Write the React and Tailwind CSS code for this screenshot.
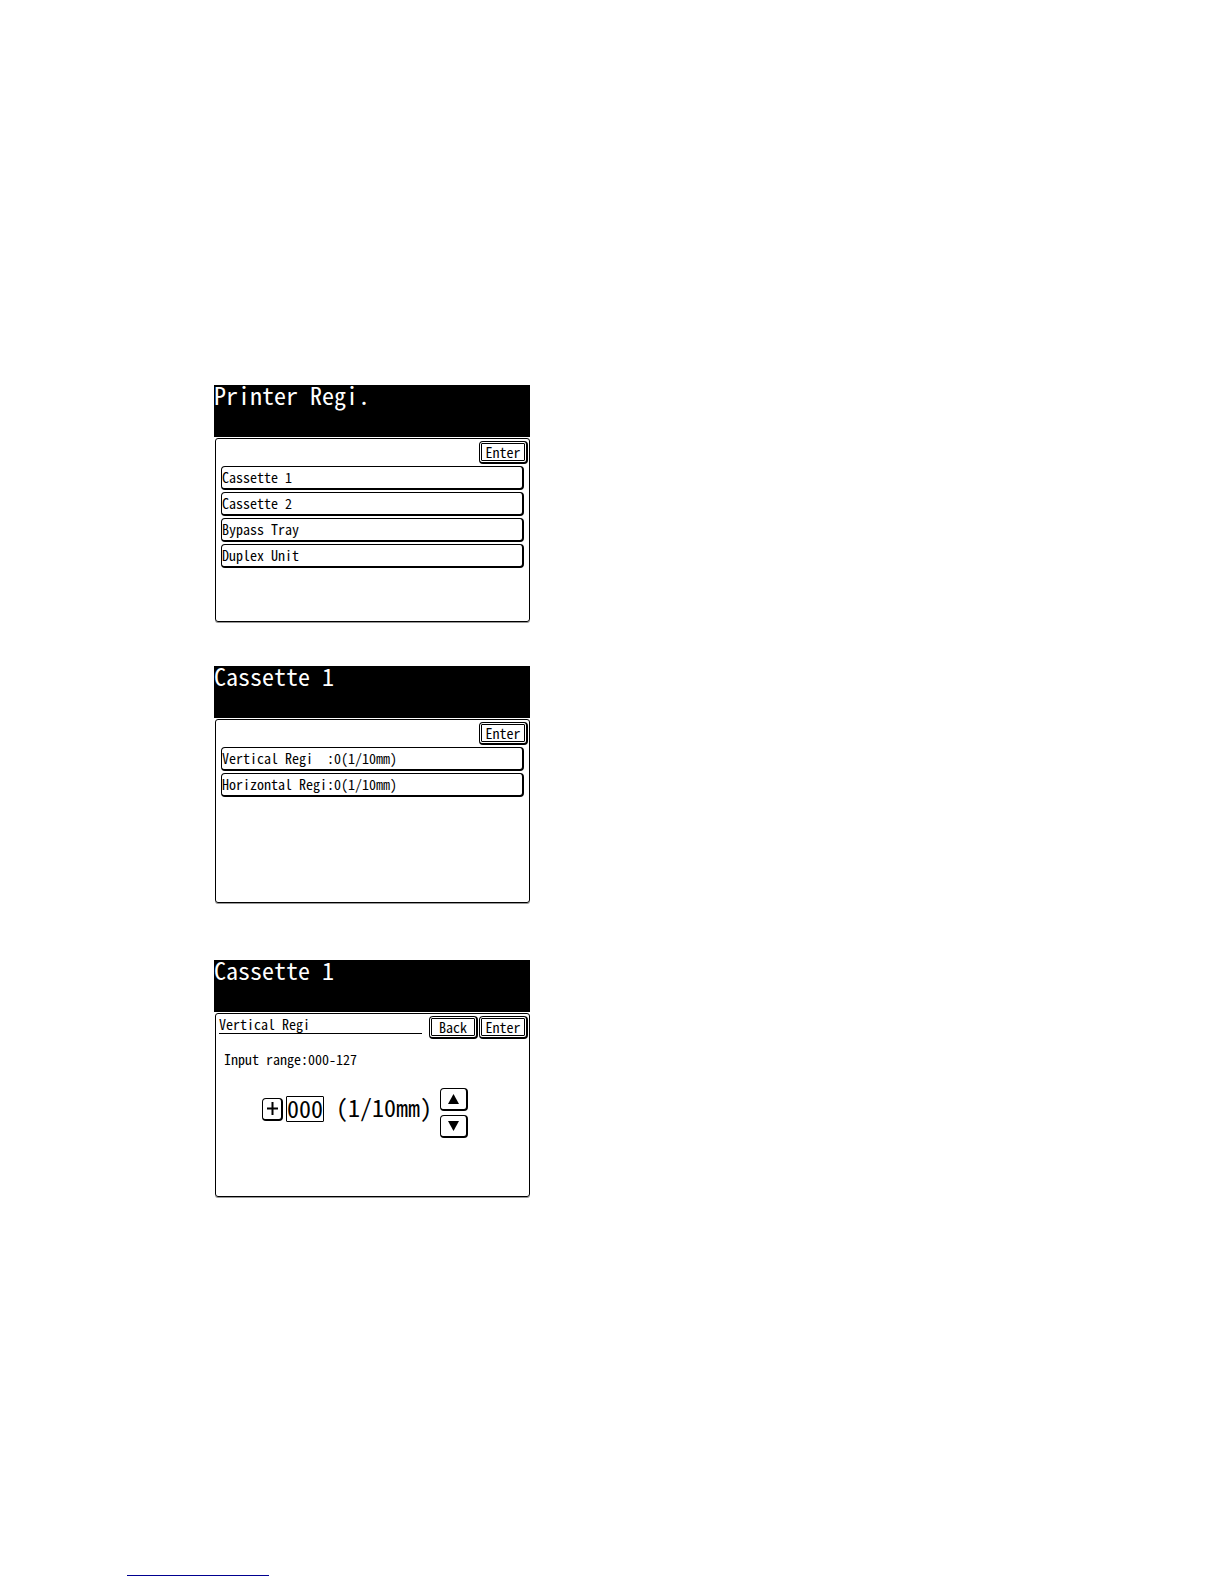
import React from 'react';

// ─── Data ──────────────────────────────────────────────────────────
const trays = ['Cassette 1', 'Cassette 2', 'Bypass Tray', 'Duplex Unit'];
const offsets = ['Vertical Regi  :0(1/10mm)', 'Horizontal Regi:0(1/10mm)'];

// ─── Screen frame ──────────────────────────────────────────────────
const Screen = ({ title, children }) => (
  <section className="w-full max-w-[316px]">
    <header className="h-[52px] bg-black text-white">
      <h2 className="text-[24px] leading-5">{title}</h2>
    </header>
    <div className="mt-px ml-px h-[184px] rounded-[3px] border border-black shadow-[0_1px_0_#999]">
      {children}
    </div>
  </section>
);

// ─── Buttons ───────────────────────────────────────────────────────
const KeyButton = ({ children }) => (
  <button
    type="button"
    className="flex h-[23px] w-[49px] rounded-[4px] border border-r-2 border-b-2 border-black p-px"
  >
    <span className="flex flex-1 items-center justify-center rounded-[1px] border border-black text-[14px] leading-4">
      {children}
    </span>
  </button>
);

const RowButton = ({ children }) => (
  <button
    type="button"
    className="block h-6 w-full rounded-[4px] border border-r-2 border-b-2 border-black pb-[2px] text-left text-[14px] leading-4 whitespace-pre"
  >
    {children}
  </button>
);

const ArrowButton = ({ label, points }) => (
  <button
    type="button"
    aria-label={label}
    className="flex h-[23px] w-7 items-center justify-center rounded-[4px] border border-r-2 border-b-2 border-black"
  >
    <svg width="11" height="10" viewBox="0 0 11 10">
      <polygon points={points} fill="black" />
    </svg>
  </button>
);

const MenuScreen = ({ title, items }) => (
  <Screen title={title}>
    <div className="flex justify-end pt-[2px] pr-px">
      <KeyButton>Enter</KeyButton>
    </div>
    <ul className="flex flex-col gap-[2px] px-[5px] pt-[2px]">
      {items.map((item) => (
        <li key={item}>
          <RowButton>{item}</RowButton>
        </li>
      ))}
    </ul>
  </Screen>
);

const InputScreen = () => (
  <Screen title="Cassette 1">
    <div className="flex items-start gap-px pt-[2px] pr-px pl-[3px]">
      <h3 className="mr-[6px] flex-1 border-b border-black pb-px text-[14px] leading-4">Vertical Regi</h3>
      <KeyButton>Back</KeyButton>
      <KeyButton>Enter</KeyButton>
    </div>
    <label htmlFor="regi" className="mt-3 ml-2 block text-[14px] leading-4">
      Input range:000-127
    </label>
    <div className="mt-[21px] ml-[46px] flex items-start">
      <div className="flex items-center pt-2">
        <button
          type="button"
          aria-label="Toggle sign"
          className="flex h-[23px] w-[21px] items-center justify-center rounded-[4px] border border-r-2 border-b-2 border-black"
        >
          <svg width="11" height="13" viewBox="0 0 11 13" stroke="black" strokeWidth="2">
            <path d="M5.5 0v13M0 6.5h11" />
          </svg>
        </button>
        <input
          id="regi"
          type="text"
          defaultValue="000"
          className="ml-[3px] h-[26px] w-[38px] rounded-[1px] border border-black pb-1 text-[24px] leading-5"
        />
        <span className="ml-3 pb-1 text-[24px] leading-5">(1/10mm)</span>
      </div>
      <div className="ml-2 flex flex-col gap-1">
        <ArrowButton label="Increase" points="5.5,0 11,10 0,10" />
        <ArrowButton label="Decrease" points="0,0 11,0 5.5,10" />
      </div>
    </div>
  </Screen>
);

const App = () => {
  return (
    <div className="flex min-h-screen flex-col bg-white text-black font-['Noto_Sans_Mono_CJK_JP','Liberation_Mono',monospace]">
      <main className="flex-1 pt-[385px] pl-[214px]">
        <MenuScreen title="Printer Regi." items={trays} />
        <div className="mt-11">
          <MenuScreen title="Cassette 1" items={offsets} />
        </div>
        <div className="mt-[57px]">
          <InputScreen />
        </div>
      </main>
      <footer className="pb-2 pl-[127px]">
        <div className="h-px w-[142px] bg-[#000090]" />
      </footer>
    </div>
  );
};

export default App;
